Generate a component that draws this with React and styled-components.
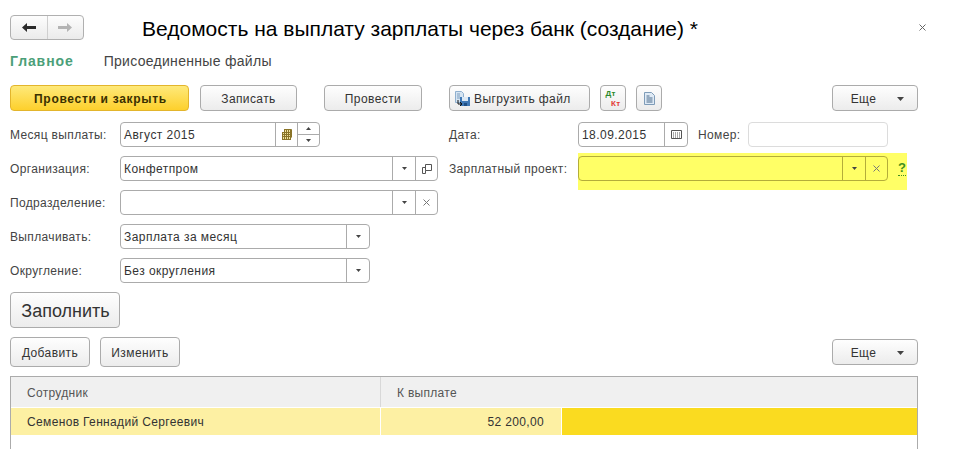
import styled, { createGlobalStyle } from "styled-components";

const GlobalStyle = createGlobalStyle`
  html, body {
    margin: 0;
    padding: 0;
    background: #fff;
  }
  body {
    font-family: "Liberation Sans", Arial, sans-serif;
    font-size: 12px;
    color: #333;
    overflow: hidden;
  }
`;

const Page = styled.div`
  width: 964px;
  height: 470px;
  box-sizing: border-box;
  padding: 15px 46px 0 10px;
`;

const Header = styled.div`
  display: flex;
  align-items: center;
  height: 25px;
`;

const NavGroup = styled.div`
  display: flex;
  width: 74px;
  height: 25px;
  box-sizing: border-box;
  border: 1px solid #b0b0b0;
  border-radius: 4px;
  background: linear-gradient(#fdfdfd, #ebebeb);
`;

const NavButton = styled.div`
  flex: 1;
  display: flex;
  align-items: center;
  justify-content: center;
  & + & {
    border-left: 1px solid #cfcfcf;
  }
`;

const Title = styled.h1`
  margin: 0 0 0 58px;
  font-size: 21px;
  font-weight: 400;
  color: #000;
  white-space: nowrap;
  line-height: 25px;
  position: relative;
  top: 1px;
`;

const CloseButton = styled.div`
  margin-left: auto;
  margin-right: -8px;
  display: flex;
`;

const Tabs = styled.div`
  display: flex;
  align-items: center;
  height: 18px;
  margin-top: 12px;
  gap: 30px;
`;

const Tab = styled.div`
  font-size: 14px;
  font-weight: ${(p) => (p.$active ? 700 : 400)};
  color: ${(p) => (p.$active ? "#4b9f79" : "#444")};
  letter-spacing: ${(p) => (p.$active ? "0.9px" : "0.3px")};
`;

const Toolbar = styled.div`
  display: flex;
  align-items: center;
  margin-top: ${(p) => p.$top}px;
`;

const Button = styled.div`
  display: flex;
  align-items: center;
  justify-content: center;
  box-sizing: border-box;
  flex: none;
  width: ${(p) => p.$width}px;
  height: ${(p) => p.$height || 26}px;
  margin-left: ${(p) => p.$gap || 0}px;
  padding-top: 1px;
  border: 1px solid #ababab;
  border-radius: 4px;
  background: linear-gradient(#fefefe, #ececec);
  color: #333;
  font-size: 12px;
  letter-spacing: 0.4px;
  white-space: nowrap;
`;

const PrimaryButton = styled(Button)`
  padding-left: 2px;
  border-color: #e3b52c;
  background: linear-gradient(#fee97a, #fdd02c);
  color: #3a3000;
  font-weight: 700;
  letter-spacing: 0.7px;
`;

const ExportButton = styled(Button)`
  justify-content: flex-start;
  padding-left: 4px;
`;

const MoreButton = styled(Button)`
  margin-left: auto;
  gap: 21px;
  padding-left: 5px;
`;

const FillButton = styled(Button)`
  margin-top: 9px;
  padding: 2px 0 0 1px;
  font-size: 18px;
  letter-spacing: 0;
  color: #333;
`;

const ExportIcon = styled.svg`
  margin-right: 4px;
`;

const DebitCredit = styled.div`
  display: flex;
  flex-direction: column;
  width: 15px;
  font-weight: 700;
  font-size: 8px;
  line-height: 9.5px;
  letter-spacing: 0.3px;
`;

const Debit = styled.span`
  align-self: flex-start;
  height: 9.5px;
  color: #2c8a2c;
`;

const Credit = styled.span`
  align-self: flex-end;
  height: 9.5px;
  color: #e23a32;
`;

const FormGrid = styled.div`
  display: grid;
  grid-template-columns: 439px 1fr;
  margin-top: 11px;
`;

const Column = styled.div`
  display: flex;
  flex-direction: column;
  gap: 9px;
`;

const Row = styled.div`
  display: flex;
  align-items: center;
  height: 25px;
`;

const Label = styled.div`
  flex: none;
  width: ${(p) => p.$width}px;
  margin-left: ${(p) => p.$gap || 0}px;
  padding-top: 1px;
  color: #444;
  letter-spacing: 0.35px;
  white-space: nowrap;
`;

const Field = styled.div`
  display: flex;
  flex: none;
  box-sizing: border-box;
  width: ${(p) => p.$width}px;
  height: 25px;
  border: 1px solid ${(p) => (p.$disabled ? "#dcdcdc" : p.$warn ? "#b4ad3a" : "#ababab")};
  border-radius: 4px;
  background: ${(p) => (p.$warn ? "#ffff66" : "#fff")};
`;

const FieldText = styled.div`
  flex: 1;
  padding: 1px 0 0 3px;
  line-height: 23px;
  color: #333;
  letter-spacing: 0.45px;
  white-space: nowrap;
`;

const Addon = styled.div`
  flex: none;
  width: ${(p) => p.$width || 22}px;
  display: flex;
  align-items: center;
  justify-content: center;
  border-left: 1px solid ${(p) => (p.$warn ? "#b4ad3a" : "#ababab")};
`;

const Spin = styled.div`
  flex: none;
  width: 21px;
  display: flex;
  flex-direction: column;
  border-left: 1px solid #ababab;
`;

const SpinPart = styled.div`
  flex: 1;
  display: flex;
  align-items: center;
  justify-content: center;
  & + & {
    border-top: 1px solid #ababab;
  }
`;

const Highlight = styled.div`
  display: flex;
  align-items: flex-start;
  width: 329px;
  box-sizing: border-box;
  height: 37px;
  margin: -3px 0 -9px;
  padding-top: 3px;
  background: #ffff66;
`;

const HelpLink = styled.div`
  margin-left: 10px;
  margin-top: 4px;
  font-size: 13px;
  font-weight: 700;
  line-height: 15px;
  color: #3f8f1f;
  border-bottom: 1px dotted #3f8f1f;
`;

const Table = styled.div`
  display: grid;
  grid-template-columns: 369px 181px 1fr;
  grid-template-rows: 30px 27px;
  row-gap: 1px;
  align-content: start;
  height: 73px;
  box-sizing: border-box;
  margin-top: 9px;
  border: 1px solid #ababab;
  border-bottom: none;
`;

const HeadCell = styled.div`
  display: flex;
  align-items: center;
  padding: 1px 0 0 ${(p) => p.$pad || 0}px;
  background: #f0f0f0;
  color: #555;
  letter-spacing: 0.3px;
`;

const HeadDivider = styled(HeadCell)`
  border-left: 1px solid #d8d8d8;
`;

const Cell = styled.div`
  display: flex;
  align-items: center;
  justify-content: ${(p) => (p.$right ? "flex-end" : "flex-start")};
  padding: ${(p) => (p.$right ? "1px 17px 0 0" : "1px 0 0 16px")};
  background: ${(p) => (p.$current ? "#fadb20" : "#fdf0a3")};
  color: #333;
  letter-spacing: 0.35px;
  & + & {
    border-left: 1px solid #fff;
  }
`;

const Caret = () => (
  <svg width="7" height="4" viewBox="0 0 7 4">
    <path d="M0 0h7L3.5 4z" fill="#444" />
  </svg>
);

const SmallCaret = () => (
  <svg width="5" height="3" viewBox="0 0 5 3">
    <path d="M0 0h5L2.5 3z" fill="#444" />
  </svg>
);

const Cross = () => (
  <svg width="7" height="7" viewBox="0 0 7 7">
    <path d="M.5.5l6 6M6.5.5l-6 6" stroke="#777" fill="none" />
  </svg>
);

const OpenIcon = () => (
  <svg width="10" height="10" viewBox="0 0 10 10" fill="none" stroke="#555">
    <path d="M3.5.5h6v6h-6z" />
    <path d="M.5 3.5h3M.5 3.5v6h3v-3" />
  </svg>
);

const MonthIcon = () => (
  <svg width="10" height="11" viewBox="0 0 10 11">
    <path d="M2 .5h8v8h-1v2H0V3h2z" fill="#f0e4a0" />
    <path
      d="M2 .5h7.5v8M0 3.5h9.5M0 5.5h9.5M0 7.5h9.5M.5 10.5h8M.5 3v8M2.5 0v11M4.5 0v11M6.5 0v11M8.5 0v11"
      stroke="#8a7428"
      fill="none"
    />
  </svg>
);

const CalendarIcon = () => (
  <svg width="11" height="9" viewBox="0 0 11 9">
    <path d="M.5.5h10v8H.5z" fill="#fff" stroke="#555" />
    <path d="M2 3h1M4 3h1M6 3h1M8 3h1M2 5h1M4 5h1M6 5h1M8 5h1M2 7h1M4 7h1M6 7h1M8 7h1" stroke="#555" />
  </svg>
);

const DocIcon = () => (
  <svg width="11" height="13" viewBox="0 0 11 13">
    <path d="M.5.5h7l3 3v9H.5z" fill="#dfeaf5" stroke="#7f9cb8" />
    <path d="M2.5 4h3M2.5 6h6M2.5 8h6M2.5 10h6" stroke="#4a6a8a" />
  </svg>
);

function More() {
  return (
    <MoreButton $width={86}>
      Еще
      <Caret />
    </MoreButton>
  );
}

function App() {
  return (
    <>
      <GlobalStyle />
      <Page>
        <Header>
          <NavGroup>
            <NavButton>
              <svg width="14" height="9" viewBox="0 0 14 9">
                <path d="M0 4.5L5 0v3h9v3H5v3z" fill="#2b2b2b" />
              </svg>
            </NavButton>
            <NavButton>
              <svg width="14" height="9" viewBox="0 0 14 9">
                <path d="M14 4.5L9 0v3H0v3h9v3z" fill="#b4b4b4" />
              </svg>
            </NavButton>
          </NavGroup>
          <Title>Ведомость на выплату зарплаты через банк (создание) *</Title>
          <CloseButton>
            <svg width="7" height="7" viewBox="0 0 7 7">
              <path d="M.5.5l6 6M6.5.5l-6 6" stroke="#666" fill="none" />
            </svg>
          </CloseButton>
        </Header>

        <Tabs>
          <Tab $active>Главное</Tab>
          <Tab>Присоединенные файлы</Tab>
        </Tabs>

        <Toolbar $top={15}>
          <PrimaryButton $width={179}>Провести и закрыть</PrimaryButton>
          <Button $width={97} $gap={11}>Записать</Button>
          <Button $width={98} $gap={27}>Провести</Button>
          <ExportButton $width={141} $gap={27}>
            <ExportIcon width="16" height="16" viewBox="0 0 16 16">
              <path d="M1.5.5h6l2 2v9h-8z" fill="#d5e4f2" stroke="#8fb0cf" />
              <path d="M3 3h3M3 5h3M3 7h3" stroke="#7d9dbd" />
              <path d="M6 6h10v9H6z" fill="#3f78b5" />
              <path d="M8 6h6v4H8z" fill="#dce9f5" />
              <path d="M10 12h3v3h-3z" fill="#1f4f85" />
              <path d="M4 9v4h4M6 11l2 2-2 2" stroke="#111" fill="none" />
            </ExportIcon>
            Выгрузить файл
          </ExportButton>
          <Button $width={26} $gap={10}>
            <DebitCredit>
              <Debit>Дт</Debit>
              <Credit>Кт</Credit>
            </DebitCredit>
          </Button>
          <Button $width={26} $gap={10}>
            <DocIcon />
          </Button>
          <More />
        </Toolbar>

        <FormGrid>
          <Column>
            <Row>
              <Label $width={110}>Месяц выплаты:</Label>
              <Field $width={200}>
                <FieldText>Август 2015</FieldText>
                <Addon $width={21}>
                  <MonthIcon />
                </Addon>
                <Spin>
                  <SpinPart>
                    <svg width="5" height="3" viewBox="0 0 5 3">
                      <path d="M0 3h5L2.5 0z" fill="#444" />
                    </svg>
                  </SpinPart>
                  <SpinPart>
                    <SmallCaret />
                  </SpinPart>
                </Spin>
              </Field>
            </Row>
            <Row>
              <Label $width={110}>Организация:</Label>
              <Field $width={318}>
                <FieldText>Конфетпром</FieldText>
                <Addon><SmallCaret /></Addon>
                <Addon $width={21}><OpenIcon /></Addon>
              </Field>
            </Row>
            <Row>
              <Label $width={110}>Подразделение:</Label>
              <Field $width={318}>
                <FieldText />
                <Addon><SmallCaret /></Addon>
                <Addon $width={21}><Cross /></Addon>
              </Field>
            </Row>
            <Row>
              <Label $width={110}>Выплачивать:</Label>
              <Field $width={250}>
                <FieldText>Зарплата за месяц</FieldText>
                <Addon><SmallCaret /></Addon>
              </Field>
            </Row>
            <Row>
              <Label $width={110}>Округление:</Label>
              <Field $width={250}>
                <FieldText>Без округления</FieldText>
                <Addon><SmallCaret /></Addon>
              </Field>
            </Row>
          </Column>
          <Column>
            <Row>
              <Label $width={129}>Дата:</Label>
              <Field $width={110}>
                <FieldText>18.09.2015</FieldText>
                <Addon><CalendarIcon /></Addon>
              </Field>
              <Label $width={50} $gap={10}>Номер:</Label>
              <Field $width={140} $disabled />
            </Row>
            <Row>
              <Label $width={129}>Зарплатный проект:</Label>
              <Highlight>
                <Field $width={310} $warn>
                  <FieldText />
                  <Addon $warn><SmallCaret /></Addon>
                  <Addon $warn $width={21}><Cross /></Addon>
                </Field>
                <HelpLink>?</HelpLink>
              </Highlight>
            </Row>
          </Column>
        </FormGrid>

        <FillButton $width={110} $height={36}>Заполнить</FillButton>

        <Toolbar $top={9}>
          <Button $width={80} $height={30}>Добавить</Button>
          <Button $width={80} $height={30} $gap={10}>Изменить</Button>
          <More />
        </Toolbar>

        <Table>
          <HeadCell $pad={16}>Сотрудник</HeadCell>
          <HeadDivider $pad={16}>К выплате</HeadDivider>
          <HeadCell />
          <Cell>Семенов Геннадий Сергеевич</Cell>
          <Cell $right>52 200,00</Cell>
          <Cell $current />
        </Table>
      </Page>
    </>
  );
}

export default App;
